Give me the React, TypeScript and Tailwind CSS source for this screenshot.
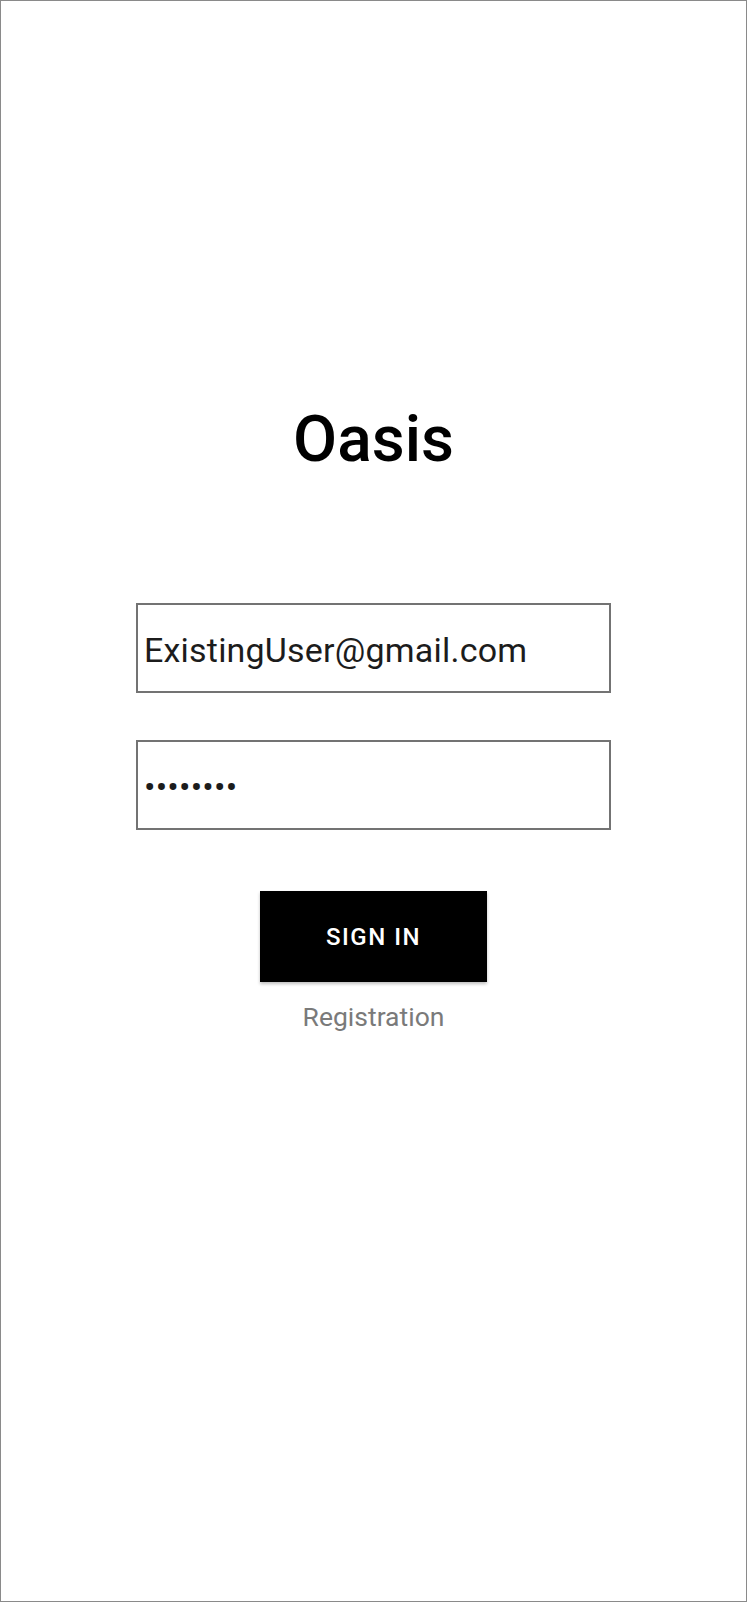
const font = { fontFamily: "Roboto, 'Noto Sans', sans-serif" };

const Field = ({ value, className = "" }: { value: string; className?: string }) => (
  <div className={`flex h-[90px] w-[475px] items-center border-2 border-[#737373] px-[6px] pt-[4px] ${className}`}>
    <span className="text-[34px] leading-none tracking-[0.2px] text-[#1c1c1c]">{value}</span>
  </div>
);

const App = () => {
  return (
    <div
      className="flex h-[1602px] w-[747px] flex-col items-center border border-[#8a8a8a] bg-white"
      style={font}
    >
      <h1 className="mt-[407px] text-[64px] font-medium leading-none text-black">Oasis</h1>
      <div className="mt-[131px] flex flex-col items-center gap-[47px]">
        <Field value="ExistingUser@gmail.com" />
        <Field value="••••••••" />
      </div>
      <button className="mt-[61px] h-[91px] w-[227px] bg-black text-[24px] font-medium leading-none tracking-[1.5px] text-white shadow-[0_2px_3px_rgba(0,0,0,0.25)]">
        SIGN IN
      </button>
      <p className="mt-[22px] text-[26.5px] leading-none text-[#7a7a7a]">Registration</p>
    </div>
  );
};

export default App;
